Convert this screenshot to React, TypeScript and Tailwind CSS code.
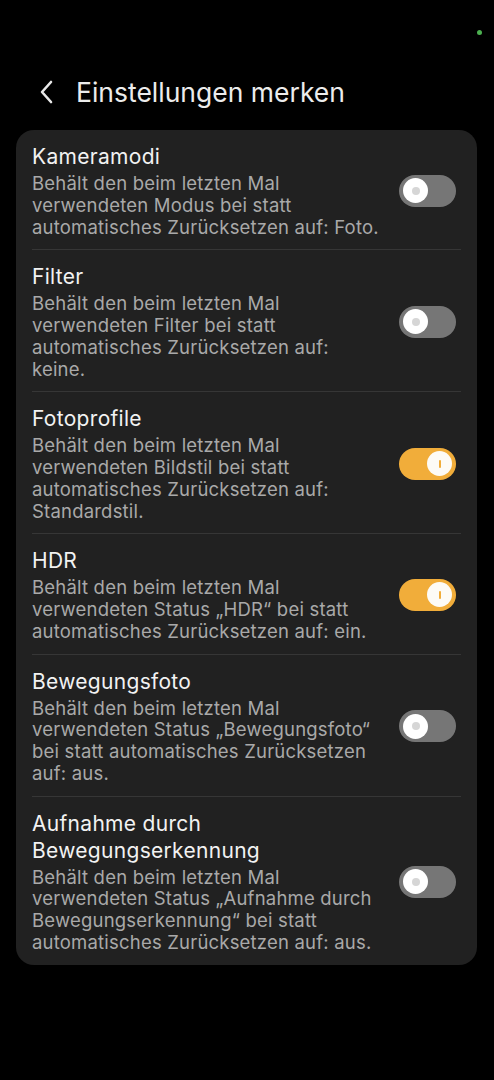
const settings = [
  {
    title: ["Kameramodi"],
    desc: [
      "Behält den beim letzten Mal",
      "verwendeten Modus bei statt",
      "automatisches Zurücksetzen auf: Foto.",
    ],
    on: false,
  },
  {
    title: ["Filter"],
    desc: [
      "Behält den beim letzten Mal",
      "verwendeten Filter bei statt",
      "automatisches Zurücksetzen auf:",
      "keine.",
    ],
    on: false,
  },
  {
    title: ["Fotoprofile"],
    desc: [
      "Behält den beim letzten Mal",
      "verwendeten Bildstil bei statt",
      "automatisches Zurücksetzen auf:",
      "Standardstil.",
    ],
    on: true,
  },
  {
    title: ["HDR"],
    desc: [
      "Behält den beim letzten Mal",
      "verwendeten Status „HDR“ bei statt",
      "automatisches Zurücksetzen auf: ein.",
    ],
    on: true,
  },
  {
    title: ["Bewegungsfoto"],
    desc: [
      "Behält den beim letzten Mal",
      "verwendeten Status „Bewegungsfoto“",
      "bei statt automatisches Zurücksetzen",
      "auf: aus.",
    ],
    on: false,
  },
  {
    title: ["Aufnahme durch", "Bewegungserkennung"],
    desc: [
      "Behält den beim letzten Mal",
      "verwendeten Status „Aufnahme durch",
      "Bewegungserkennung“ bei statt",
      "automatisches Zurücksetzen auf: aus.",
    ],
    on: false,
  },
];

function Toggle({ on }: { on: boolean }) {
  if (on) {
    return (
      <div className="flex h-[32px] w-[57px] shrink-0 items-center justify-end rounded-full bg-[#f1ad3a] pr-[4px]">
        <div className="flex h-[25px] w-[25px] items-center justify-center rounded-full bg-[#fdfbf6]">
          <div className="h-[8px] w-[2px] rounded-full bg-[#f1ad3a]" />
        </div>
      </div>
    );
  }
  return (
    <div className="flex h-[32px] w-[57px] shrink-0 items-center rounded-full bg-[#767676] pl-[4px]">
      <div className="flex h-[25px] w-[25px] items-center justify-center rounded-full bg-white">
        <div className="h-[8px] w-[8px] rounded-full bg-[#d6d6d6]" />
      </div>
    </div>
  );
}

export default function App() {
  return (
    <div
      className="relative min-h-[1080px] w-full bg-black"
      style={{ fontFamily: "Inter, Roboto, 'Noto Sans', sans-serif" }}
    >
      <div className="absolute right-[12px] top-[30px] h-[5px] w-[5px] rounded-full bg-[#4cb050]" />

      <header className="flex items-center gap-[20px] pl-[38px] pt-[74px]">
        <svg width="18" height="26" viewBox="0 0 18 26" className="text-[#e8e8e8]">
          <path d="M13 3 L4 13 L13 23" fill="none" stroke="currentColor" strokeWidth="2.6" strokeLinecap="round" strokeLinejoin="round" />
        </svg>
        <h1 className="text-[26.5px] leading-[36px] text-[#ececec]">Einstellungen merken</h1>
      </header>

      <div className="mx-[16px] mt-[20px] w-[461px] rounded-[18px] bg-[#212121]">
        {settings.map((s, i) => (
          <div key={i}>
            {i > 0 && <div className="mx-[16px] h-px bg-[#363636]" />}
            <div className="flex items-center justify-between pb-[11px] pl-[16px] pr-[21px] pt-[13px]">
              <div>
                <div className="mb-[3px] text-[21px] leading-[27px] tracking-[0.3px] text-[#f2f2f2]">
                  {s.title.map((t) => (
                    <div key={t}>{t}</div>
                  ))}
                </div>
                <div className="text-[18.5px] leading-[21.75px] tracking-[0.2px] text-[#a9a9a9]">
                  {s.desc.map((d, j) => (
                    <div key={j} className="whitespace-nowrap">{d}</div>
                  ))}
                </div>
              </div>
              <Toggle on={s.on} />
            </div>
          </div>
        ))}
      </div>
    </div>
  );
}
